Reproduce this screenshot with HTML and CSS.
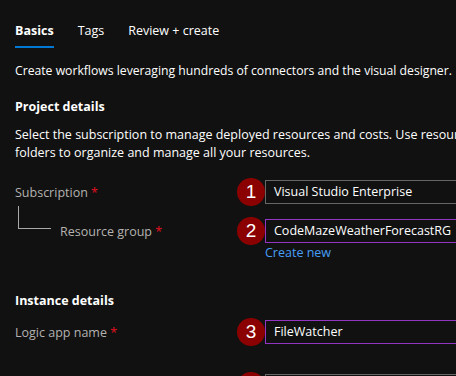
FILE: index.html
```html
<!DOCTYPE html>
<html>
<head>
<meta charset="utf-8">
<link rel="stylesheet" href="styles.css">
</head>
<body>
<div class="page">
  <nav class="tabs">
    <span class="tab active">Basics</span>
    <span class="tab">Tags</span>
    <span class="tab">Review + create</span>
  </nav>
  <p class="desc">Create workflows leveraging hundreds of connectors and the visual designer.</p>
  <h2 class="heading first">Project details</h2>
  <p class="para">Select the subscription to manage deployed resources and costs. Use resource groups like<br>folders to organize and manage all your resources.</p>

  <div class="row row-sub">
    <div class="label">Subscription <span class="req">*</span></div>
    <div class="field">
      <div class="line"><span class="badge">1</span><div class="input">Visual Studio Enterprise</div></div>
    </div>
  </div>
  <div class="row row-rg">
    <div class="label child">Resource group <span class="req">*</span></div>
    <div class="field">
      <div class="line"><span class="badge">2</span><div class="input focus">CodeMazeWeatherForecastRG</div></div>
      <a class="link">Create new</a>
    </div>
  </div>

  <h2 class="heading second">Instance details</h2>
  <div class="row row-name">
    <div class="label">Logic app name <span class="req">*</span></div>
    <div class="field">
      <div class="line"><span class="badge">3</span><div class="input focus">FileWatcher</div></div>
    </div>
  </div>
  <div class="row row-next">
    <div class="label"></div>
    <div class="field">
      <div class="line"><span class="badge"></span><div class="input"></div></div>
    </div>
  </div>
</div>
</body>
</html>
```
FILE: styles.css
```css
html, body {
  margin: 0;
  padding: 0;
  background: #111111;
  overflow: hidden;
}
body {
  width: 456px;
  height: 376px;
  font-family: "Open Sans", "Noto Sans", sans-serif;
  font-size: 12.5px;
  color: #ffffff;
}
.page {
  padding-left: 15px;
  width: 700px;
}
.tabs {
  display: flex;
  gap: 24px;
  margin-top: 20px;
}
.tab {
  line-height: 22px;
  padding-bottom: 4px;
  border-bottom: 2px solid transparent;
}
.tab.active {
  font-weight: 700;
  border-bottom-color: #0078d4;
}
.desc {
  margin: 14px 0 0;
  line-height: 18px;
  font-size: 12.2px;
  white-space: nowrap;
}
.heading {
  font-size: 12.5px;
  font-weight: 700;
  line-height: 20px;
  margin: 0;
}
.heading.first { margin-top: 17px; }
.heading.second { margin-top: 30px; }
.para {
  margin: 9px 0 0;
  line-height: 18px;
  white-space: nowrap;
}
.row {
  display: flex;
}
.row-sub { margin-top: 16px; }
.row-rg { margin-top: 11px; }
.row-name { margin-top: 7px; }
.row-next { margin-top: 26px; }
.label {
  width: 222px;
  flex: none;
  line-height: 30px;
  height: 28px;
  color: #b4b2b0;
  position: relative;
}
.label.child {
  padding-left: 45px;
  box-sizing: border-box;
}
.label.child::before {
  content: "";
  position: absolute;
  left: 3px;
  top: -11px;
  width: 32px;
  height: 22px;
  border-left: 1px solid #a8a8a8;
  border-bottom: 1px solid #a8a8a8;
}
.req {
  color: #e0101e;
}
.field {
  display: flex;
  flex-direction: column;
}
.line {
  display: flex;
  align-items: center;
  height: 28px;
}
.badge {
  width: 28px;
  height: 28px;
  border-radius: 50%;
  background: #8b0000;
  color: #ffffff;
  font-family: "Liberation Sans", Arial, sans-serif;
  font-size: 19px;
  line-height: 28px;
  text-align: center;
  flex: none;
}
.input {
  width: 300px;
  height: 24px;
  box-sizing: border-box;
  border: 1px solid #666666;
  padding-left: 8px;
  line-height: 22px;
  color: #ffffff;
}
.input.focus {
  border-color: #9434c2;
}
.link {
  color: #479ef5;
  line-height: 16px;
  margin-left: 28px;
}
```
